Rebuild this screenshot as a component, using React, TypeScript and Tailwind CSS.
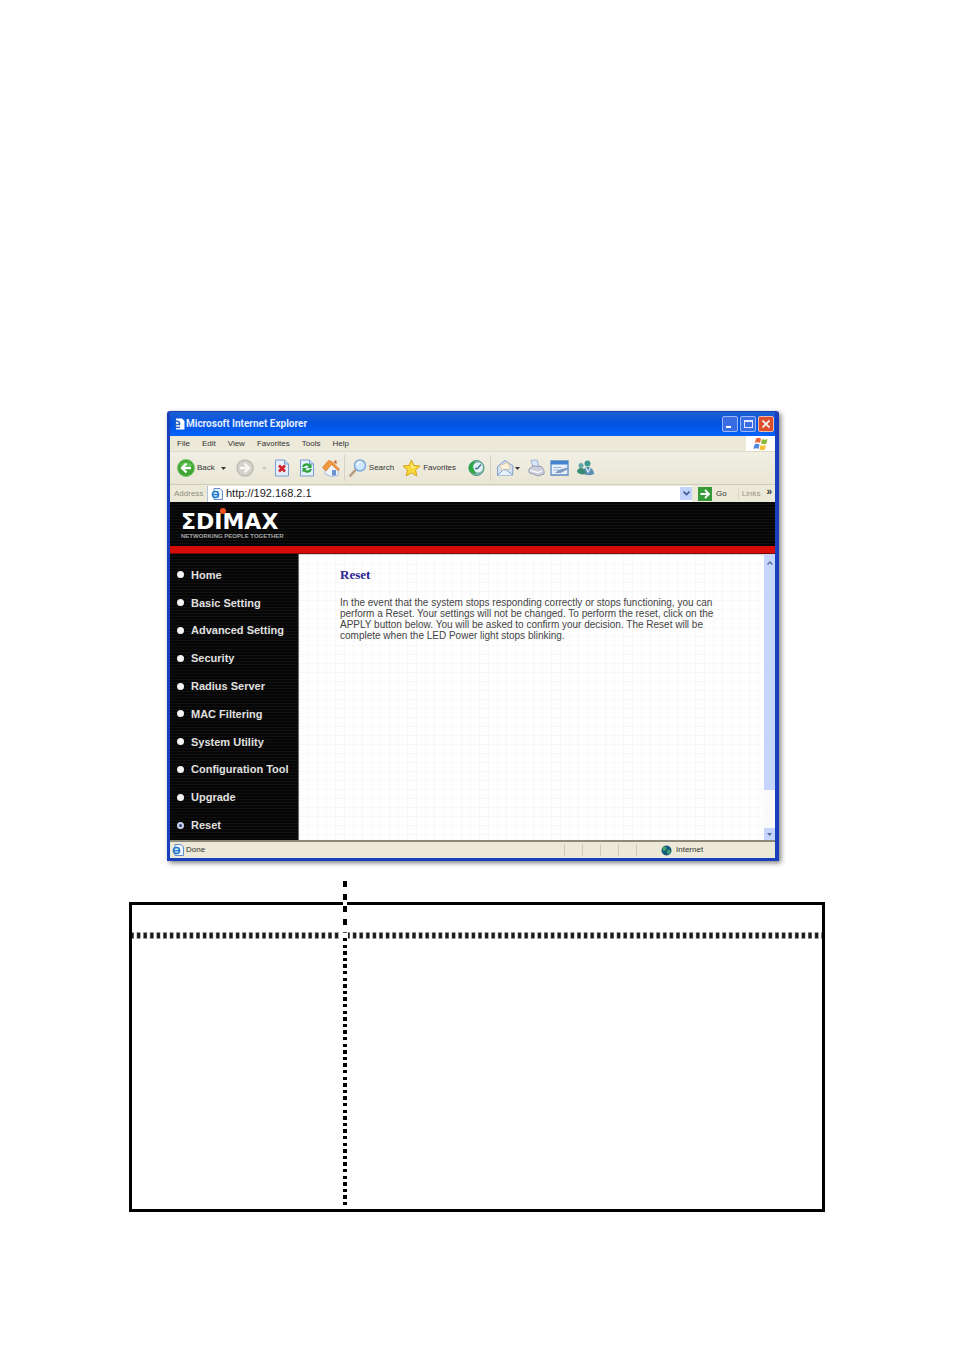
import type { ReactNode } from "react";

const menuItems = ["File", "Edit", "View", "Favorites", "Tools", "Help"];

const navItems = [
  "Home",
  "Basic Setting",
  "Advanced Setting",
  "Security",
  "Radius Server",
  "MAC Filtering",
  "System Utility",
  "Configuration Tool",
  "Upgrade",
  "Reset",
];

function PageIcon({ className }: { className: string }) {
  return (
    <svg viewBox="0 0 12 12" className={className} aria-hidden="true">
      <path d="M3 0.5h6l2.5 2.5v8.5h-8.5z" fill="#eef5ff" stroke="#5f8fd0" />
      <circle cx="4.5" cy="6.5" r="3" fill="#d8ecff" stroke="#2277c9" strokeWidth="1.6" />
      <path d="M2 6.6h5" stroke="#2277c9" strokeWidth="1.2" />
    </svg>
  );
}

function CaretDown({ color }: { color: string }) {
  return (
    <svg viewBox="0 0 5 3" className="h-[3px] w-[5px] shrink-0" aria-hidden="true">
      <path d="M0 0h5l-2.5 3z" fill={color} />
    </svg>
  );
}

function BackIcon() {
  return (
    <svg viewBox="0 0 18 18" className="size-[18px]" aria-hidden="true">
      <circle cx="9" cy="9" r="8.5" fill="#3fa535" stroke="#7cc46f" />
      <path d="M2.5 7a7 6 0 0 1 13 0z" fill="#74cc60" opacity="0.7" />
      <path d="M9.5 4.5 5 9l4.5 4.5M5.5 9H14" fill="none" stroke="#fff" strokeWidth="2.4" />
    </svg>
  );
}

function ForwardIcon() {
  return (
    <svg viewBox="0 0 18 18" className="size-[18px]" aria-hidden="true">
      <circle cx="9" cy="9" r="8" fill="#d3d2ca" stroke="#bdbcb4" strokeWidth="1.5" />
      <path d="M8.5 4.5 13 9l-4.5 4.5M12.5 9H4" fill="none" stroke="#f8f7f2" strokeWidth="2.4" />
    </svg>
  );
}

function StopIcon() {
  return (
    <svg viewBox="0 0 16 18" className="h-[18px] w-4" aria-hidden="true">
      <path d="M1.5 1h9l4 4v12h-13z" fill="#e6eefc" stroke="#7b9ccf" />
      <path d="M10.5 1v4h4" fill="#c5d8f5" stroke="#7b9ccf" />
      <path d="m5 6.5 6 6M11 6.5l-6 6" stroke="#d3222a" strokeWidth="2.6" />
    </svg>
  );
}

function RefreshIcon() {
  return (
    <svg viewBox="0 0 16 18" className="h-[18px] w-4" aria-hidden="true">
      <path d="M1.5 1h9l4 4v12h-13z" fill="#e2f1fb" stroke="#7b9ccf" />
      <path d="M10.5 1v4h4" fill="#c5d8f5" stroke="#7b9ccf" />
      <path d="M4 8c1-3 5-3.5 7-1M12 10c-1 3-5 3.5-7 1" fill="none" stroke="#27a036" strokeWidth="2.2" />
      <path d="M12.5 4.5V9H8zM3.5 13.5V9H8z" fill="#27a036" />
    </svg>
  );
}

function HomeIcon() {
  return (
    <svg viewBox="0 0 18 18" className="size-[18px]" aria-hidden="true">
      <path d="M3 9.5 10 4l6 6v6.5l-6.5 1L3 15z" fill="#f0f4fc" stroke="#a9bbdd" />
      <path d="M0.5 8.5 6.5 1.5l3.5 1 7.5 8-1.5 1-6.5-6L4 12z" fill="#ef9a3d" stroke="#d9772a" strokeWidth="0.7" />
      <path d="M10 11h4v5.5h-4z" fill="#6b93cf" />
      <path d="M12.5 1.5h2v4l-2-2z" fill="#b9632b" />
    </svg>
  );
}

function SearchIcon() {
  return (
    <svg viewBox="0 0 18 18" className="size-[18px]" aria-hidden="true">
      <path d="M6.5 11 1.5 16.5" stroke="#b59a80" strokeWidth="2.6" strokeLinecap="round" />
      <circle cx="11" cy="6.5" r="5.5" fill="#cfe8fb" stroke="#7fa9d8" strokeWidth="1.5" />
      <path d="M8 6a3.5 3.5 0 0 1 3.5-3" fill="none" stroke="#fff" strokeWidth="1.5" />
    </svg>
  );
}

function StarIcon() {
  return (
    <svg viewBox="0 0 19 18" className="h-[18px] w-[19px]" aria-hidden="true">
      <path
        d="m9.5 1 2.4 5.4 6.1.6-4.5 4 1.4 6-5.4-3.2L4.1 17l1.4-6L1 7l6.1-.6z"
        fill="#f9d83b"
        stroke="#d9a41c"
      />
      <path d="m9.5 3.5 1.5 4 3.5.5-5 1.5z" fill="#fff3a0" />
    </svg>
  );
}

function HistoryIcon() {
  return (
    <svg viewBox="0 0 18 18" className="size-[18px]" aria-hidden="true">
      <circle cx="9.5" cy="9" r="7.5" fill="#7fb5ae" stroke="#4c9478" />
      <circle cx="11" cy="8.5" r="5" fill="#e4f1f7" />
      <path d="m14 5.5-3.5 4H8" fill="none" stroke="#3d7290" strokeWidth="1.3" />
      <path d="M1.5 9C2 5 5 2.5 9 2.5 6 5 5.5 7 6.5 9.5L9 15C4.5 14.5 2 12 1.5 9z" fill="#2ca744" />
    </svg>
  );
}

function MailIcon() {
  return (
    <svg viewBox="0 0 18 18" className="size-[18px]" aria-hidden="true">
      <path d="M1.5 7.5 9 1.5l8 5.5-.5 9-15 .5z" fill="#d3e2f6" stroke="#809fc9" />
      <path d="m4 6.5 8-3 2.5 6-8.5 2.5z" fill="#fdf3dc" stroke="#d9b98b" strokeWidth="0.7" />
      <path d="m1.5 16.5 6-6 3 .5 6 5" fill="#e9f1fc" stroke="#809fc9" />
    </svg>
  );
}

function PrintIcon() {
  return (
    <svg viewBox="0 0 18 18" className="size-[18px]" aria-hidden="true">
      <path d="M4 1.5 10 1l2 7H6z" fill="#d9e7fb" stroke="#9db3d6" />
      <path d="m2 10 4-3 8.5.5 2.5 4V15l-6 2-9-3.5z" fill="#cdd0dc" stroke="#9599ad" />
      <path d="m3 11.5 8 2 5-2" fill="none" stroke="#f6f7fa" strokeWidth="1.3" />
    </svg>
  );
}

function EditIcon() {
  return (
    <svg viewBox="0 0 19 16" className="h-4 w-[19px]" aria-hidden="true">
      <path d="M1 1h17v14H1z" fill="#e6effb" stroke="#5d8bc4" strokeWidth="1.3" />
      <path d="M1 1h17v3.5H1z" fill="#4382cd" />
      <path d="M3.5 7.5h8M3.5 10h5" stroke="#9bb5da" />
      <path d="m5 13 3.5-3 9-2.5 1 1.5-8 4z" fill="#7d9cc0" />
    </svg>
  );
}

function MessengerIcon() {
  return (
    <svg viewBox="0 0 19 18" className="h-[18px] w-[19px]" aria-hidden="true">
      <circle cx="11.5" cy="4.5" r="3" fill="#3d9a8d" />
      <path d="M7 14c0-4 2-6 5-6s6 3 6 7c-4 2-8 1.5-11-1z" fill="#5b8fb5" />
      <circle cx="5" cy="6.5" r="2.5" fill="#63a5a4" />
      <path d="M1 13c0-3 2-4 4-4 3 0 4 2 4.5 6C6 16 3 15 1 13z" fill="#3a8a73" />
      <path d="m10 9 2 4 2.5-4" fill="none" stroke="#e0eef5" strokeWidth="1.3" />
    </svg>
  );
}

function WindowsFlag() {
  return (
    <svg viewBox="0 0 16 14" className="h-3.5 w-4" aria-hidden="true">
      <path d="M3 1.5c2-1 3.5-1 5 0L7 6C5.5 5 4 5 2 6z" fill="#e8663a" />
      <path d="M9 2c2 1 3.5 1 5.5 0l-1 4.5C11.5 7.5 10 7.5 8 6.5z" fill="#8bb93b" />
      <path d="M1.5 7.5c2-1 3.5-1 5 0l-1 4.5c-1.5-1-3-1-5 0z" fill="#4f86dd" />
      <path d="M7.5 8c2 1 3.5 1 5.5 0l-1 4.5c-2 1-3.5 1-5.5 0z" fill="#f4bf36" />
    </svg>
  );
}

function ToolButton({ label, children, className = "" }: { label: string; children: ReactNode; className?: string }) {
  return (
    <button type="button" aria-label={label} className={`flex shrink-0 items-center ${className}`}>
      {children}
    </button>
  );
}

function TitleBar() {
  return (
    <header className="flex h-[24px] items-center bg-linear-to-b from-[#1d5fd0] via-[#0052e2] to-[#0664fa] pr-px pl-[3px]">
      <svg viewBox="0 0 12 12" className="mr-px size-3" aria-hidden="true">
        <path d="M3 0.5h6l2.5 2.5v8.5H3z" fill="#fff" />
        <path d="M1 6.5h6M1.5 4.5c2-2.5 5-1.5 5.5 2M1.5 8c1.5 2 4 2 5.5.5" fill="none" stroke="#2a62c8" strokeWidth="1.5" />
      </svg>
      <h1 className="font-[Roboto,sans-serif] text-[10px] leading-3 font-bold text-[#e3edff]">Microsoft Internet Explorer</h1>
      <div className="ml-auto flex gap-[2px]">
        <button type="button" aria-label="Minimize" className="flex size-4 items-end rounded-[2px] border border-[#9db9f2] bg-[#3a6ce4] p-[3px]">
          <span className="h-[2px] w-[5px] bg-white" />
        </button>
        <button type="button" aria-label="Maximize" className="flex size-4 items-center justify-center rounded-[2px] border border-[#9db9f2] bg-[#3a6ce4]">
          <span className="h-2 w-[9px] border border-t-2 border-[#dfe9ff]" />
        </button>
        <button type="button" aria-label="Close" className="flex size-4 items-center justify-center rounded-[2px] border border-[#eeb9a8] bg-[#dd4f2c]">
          <svg viewBox="0 0 8 8" className="size-2" aria-hidden="true">
            <path d="m0.5 0.5 7 7M7.5 0.5l-7 7" stroke="#fff" strokeWidth="1.6" />
          </svg>
        </button>
      </div>
    </header>
  );
}

function MenuBar() {
  return (
    <div className="flex h-[16px] items-center border-b border-[#dedac9] pl-[7px]">
      <nav className="flex flex-1 gap-3">
        {menuItems.map((item) => (
          <button key={item} type="button" className="text-[8px] leading-[10px]">
            {item}
          </button>
        ))}
      </nav>
      <div className="flex h-[15px] w-[29px] items-center justify-center bg-white">
        <WindowsFlag />
      </div>
    </div>
  );
}

function Toolbar() {
  return (
    <div className="flex h-[33px] items-center border-b border-[#d0ccbd] bg-linear-to-b from-[#f1efe3] to-[#e9e6d6] pl-[7px] text-[8px]">
      <ToolButton label="Back" className="gap-[2px]">
        <BackIcon />
        <span>Back</span>
        <span className="pl-1">
          <CaretDown color="#333" />
        </span>
      </ToolButton>
      <ToolButton label="Forward" className="ml-[10px] gap-2">
        <ForwardIcon />
        <CaretDown color="#c9c6ba" />
      </ToolButton>
      <ToolButton label="Stop" className="ml-[7px]">
        <StopIcon />
      </ToolButton>
      <ToolButton label="Refresh" className="ml-[9px]">
        <RefreshIcon />
      </ToolButton>
      <ToolButton label="Home" className="ml-[7px]">
        <HomeIcon />
      </ToolButton>
      <span className="mx-1 h-[26px] w-px bg-[#d5d2c3]" />
      <ToolButton label="Search" className="gap-[2px]">
        <SearchIcon />
        <span>Search</span>
      </ToolButton>
      <ToolButton label="Favorites" className="ml-2 gap-[2px]">
        <StarIcon />
        <span>Favorites</span>
      </ToolButton>
      <ToolButton label="History" className="ml-[11px]">
        <HistoryIcon />
      </ToolButton>
      <span className="mx-[5px] h-[26px] w-px bg-[#d5d2c3]" />
      <ToolButton label="Mail" className="gap-px">
        <MailIcon />
        <CaretDown color="#333" />
      </ToolButton>
      <ToolButton label="Print" className="ml-[7px]">
        <PrintIcon />
      </ToolButton>
      <ToolButton label="Edit" className="ml-[5px]">
        <EditIcon />
      </ToolButton>
      <ToolButton label="Messenger" className="ml-[7px]">
        <MessengerIcon />
      </ToolButton>
    </div>
  );
}

function AddressBar() {
  return (
    <div className="flex h-[17px] items-center">
      <label htmlFor="address" className="w-[37px] pl-1 text-[8px] text-[#8f8c82]">
        Address
      </label>
      <div className="flex h-4 flex-1 items-center border-l border-[#b4c3dc] bg-white pl-[3px]">
        <PageIcon className="size-3" />
        <input
          id="address"
          type="text"
          defaultValue="http://192.168.2.1"
          className="h-[14px] min-w-0 flex-1 bg-transparent pl-[3px] text-[11px] text-[#222] outline-none"
        />
        <button type="button" aria-label="Show addresses" className="flex h-[13px] w-3 items-center justify-center bg-[#c3d3fb]">
          <svg viewBox="0 0 7 5" className="h-[5px] w-[7px]" aria-hidden="true">
            <path d="m0.5 0.5 3 3 3-3" fill="none" stroke="#405a93" strokeWidth="1.6" />
          </svg>
        </button>
      </div>
      <button type="button" className="flex items-center gap-1 pl-[6px] text-[8px]">
        <svg viewBox="0 0 14 14" className="size-3.5" aria-hidden="true">
          <path d="M0 0h14v14H0z" fill="#359a37" />
          <path d="M2.5 7h8M7 3l4 4-4 4" fill="none" stroke="#fff" strokeWidth="1.8" />
        </svg>
        Go
      </button>
      <span className="ml-[11px] h-3 w-px bg-[#dbd8ca]" />
      <div className="flex items-center gap-[6px] pr-[3px] pl-[3px] text-[8px] text-[#99968b]">
        Links
        <button type="button" aria-label="More links" className="pb-1 text-[10px] leading-[10px] font-bold text-[#333]">
          »
        </button>
      </div>
    </div>
  );
}

function Logo() {
  return (
    <div className="relative w-[104px] pt-[9px] text-white" aria-label="EDIMAX">
      <div className="font-['DejaVu_Sans',sans-serif] text-[22px] leading-[22px] font-bold">ΣDIMAX</div>
      <div className="text-[6px] leading-[6px] font-bold whitespace-nowrap text-[#a5a5a5]">NETWORKING PEOPLE TOGETHER</div>
      <span className="absolute top-[6px] left-[39px] size-[6px] rounded-full bg-[#f2501c]" />
    </div>
  );
}

function Sidebar() {
  return (
    <nav className="flex w-[129px] shrink-0 flex-col border-r border-[#6d6d6d] bg-[repeating-linear-gradient(#060606_0px_2px,#111111_2px_3px)] pt-[7px] pb-px">
      {navItems.map((item) => (
        <a key={item} href="#" className="flex flex-1 items-center gap-[7px] pl-[7px] text-[11px] leading-3 font-bold whitespace-nowrap text-[#e0e0e0]">
          <span
            className={
              item === "Reset"
                ? "size-[7px] rounded-full border-2 border-[#c9d3ee] bg-[#30406b]"
                : "size-[7px] rounded-full bg-[#f4f4f4]"
            }
          />
          {item}
        </a>
      ))}
    </nav>
  );
}

function Scrollbar() {
  return (
    <div className="flex w-[11px] shrink-0 flex-col bg-[#fbfafa]">
      <div className="flex h-[236px] flex-col items-center bg-[#c5d5fd] pt-[7px]">
        <svg viewBox="0 0 6 4" className="h-1 w-[6px]" aria-hidden="true">
          <path d="m0.5 3.5 2.5-2.5 2.5 2.5" fill="none" stroke="#55689a" strokeWidth="1.4" />
        </svg>
      </div>
      <div className="mt-auto flex h-[12px] items-center justify-center bg-[#c5d5fd]">
        <CaretDown color="#55689a" />
      </div>
    </div>
  );
}

function StatusBar() {
  return (
    <footer className="flex h-[18px] items-center border-t-2 border-[#8b887c] text-[8px]">
      <PageIcon className="mr-[2px] ml-[2px] size-3" />
      <span className="flex-1">Done</span>
      <div className="flex w-[93px] gap-[17px]">
        <span className="h-3 w-px bg-[#cfcbba]" />
        <span className="h-3 w-px bg-[#cfcbba]" />
        <span className="h-3 w-px bg-[#cfcbba]" />
        <span className="h-3 w-px bg-[#cfcbba]" />
        <span className="h-3 w-px bg-[#cfcbba]" />
      </div>
      <div className="flex w-[118px] items-center gap-1 pl-1">
        <svg viewBox="0 0 11 11" className="size-[11px]" aria-hidden="true">
          <circle cx="5.5" cy="5.5" r="5" fill="#155a7c" />
          <path d="M2 2.5c2-1.5 3-1 3.5.5S4 6 3 6 1 4.5 2 2.5zM6.5 5.5c2-1 3 0 3 1S8 9.5 7 9 5.5 6.5 6.5 5.5z" fill="#43a66c" />
        </svg>
        Internet
      </div>
    </footer>
  );
}

function BrowserWindow() {
  return (
    <section className="rounded-t-[3px] border-t border-r-4 border-b-3 border-l-3 border-[#1a3fbd] bg-[#ece9d8] font-['Liberation_Sans',sans-serif] text-[#333] shadow-[2px_2px_5px_rgba(0,0,0,0.5)]">
      <TitleBar />
      <MenuBar />
      <Toolbar />
      <AddressBar />
      <div className="h-[44px] bg-[repeating-linear-gradient(#060606_0px_2px,#111111_2px_3px)] pl-[11px]">
        <Logo />
      </div>
      <div className="h-2 border-b border-[#7a0a06] bg-[#d40b07]" />
      <div className="flex h-[286px]">
        <Sidebar />
        <main className="flex-1 border-t border-[#d5d9e4] bg-[#fefefe] bg-[linear-gradient(#f7f7f7_1px,transparent_1px),linear-gradient(90deg,#f7f7f7_1px,transparent_1px)] bg-[size:9px_9px] pt-3 pl-[41px]">
          <h2 className="font-['Liberation_Serif',serif] text-[13px] leading-4 font-bold text-[#2a2390]">Reset</h2>
          <p className="pt-[14px] text-[10px] leading-[11px] whitespace-nowrap text-[#444]">
            In the event that the system stops responding correctly or stops functioning, you can
            <br />
            perform a Reset. Your settings will not be changed. To perform the reset, click on the
            <br />
            APPLY button below. You will be asked to confirm your decision. The Reset will be
            <br />
            complete when the LED Power light stops blinking.
          </p>
        </main>
        <Scrollbar />
      </div>
      <StatusBar />
    </section>
  );
}

function DottedRule() {
  return (
    <svg className="block h-[7px] w-full" aria-hidden="true">
      <line x1="0" y1="3.5" x2="100%" y2="3.5" stroke="#999" strokeWidth="7" strokeDasharray="4 2.6" strokeDashoffset="2" />
      <line x1="0" y1="3.5" x2="100%" y2="3.5" stroke="#1a1a1a" strokeWidth="5" strokeDasharray="3 3.6" strokeDashoffset="1.5" />
    </svg>
  );
}

function ParameterBox() {
  return (
    <section className="flex">
      <div className="mt-[21px] h-[310px] w-[214px] border-y-3 border-l-3 border-black pt-[27px] pr-[3px]">
        <DottedRule />
      </div>
      <div className="border-b-3 border-black">
        <svg className="block h-[328px] w-1" shapeRendering="crispEdges" aria-hidden="true">
          <line x1="2" y1="0" x2="2" y2="50" stroke="#000" strokeWidth="4" strokeDasharray="6 6.6" />
          <line x1="2" y1="51" x2="2" y2="52" stroke="#555" strokeWidth="4" />
          <line x1="2" y1="57" x2="2" y2="328" stroke="#000" strokeWidth="4" strokeDasharray="3.3 3.3" />
        </svg>
      </div>
      <div className="mt-[21px] h-[310px] flex-1 border-y-3 border-r-3 border-black pt-[27px] pl-px">
        <DottedRule />
      </div>
    </section>
  );
}

export default function App() {
  return (
    <div className="bg-white pt-[411px] pb-[145px]">
      <div className="pr-[175px] pl-[167px]">
        <BrowserWindow />
      </div>
      <div className="px-[129px] pt-[20px]">
        <ParameterBox />
      </div>
    </div>
  );
}
